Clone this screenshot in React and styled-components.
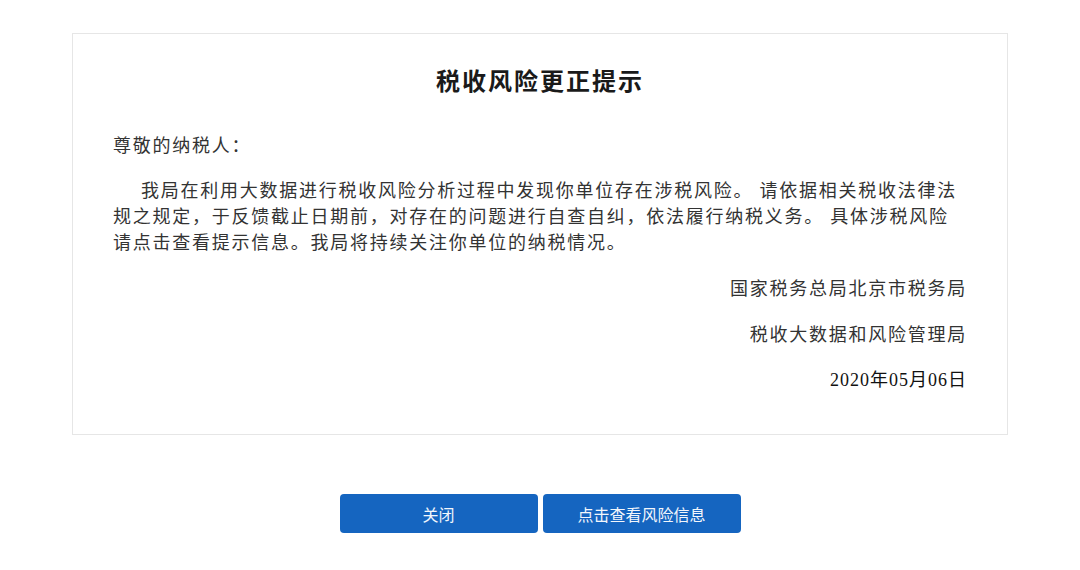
import React from 'react';
import styled, { createGlobalStyle } from 'styled-components';

const GlobalStyle = createGlobalStyle`
  html, body {
    margin: 0;
    padding: 0;
    background: #fff;
  }
  body {
    font-family: "Liberation Serif", "Noto Sans CJK SC", serif;
  }
`;

const notice = {
  title: '税收风险更正提示',
  greeting: '尊敬的纳税人：',
  lines: [
    '我局在利用大数据进行税收风险分析过程中发现你单位存在涉税风险。 请依据相关税收法律法规之规定，于反馈截止日期前，对存在的问题进行自查自纠，依法履行纳税义务。 具体涉税风险',
    '请点击查看提示信息。我局将持续关注你单位的纳税情况。',
  ],
  signs: ['国家税务总局北京市税务局', '税收大数据和风险管理局'],
  date: '2020年05月06日',
};

function App() {
  return (
    <Styled.Page>
      <GlobalStyle />
      <Styled.Card>
        <Styled.Title>{notice.title}</Styled.Title>
        <Styled.Greeting>{notice.greeting}</Styled.Greeting>
        <Styled.Body>
          {notice.lines[0]}
          <br />
          {notice.lines[1]}
        </Styled.Body>
        {notice.signs.map((s) => (
          <Styled.Sign key={s}>{s}</Styled.Sign>
        ))}
        <Styled.Sign $date>{notice.date}</Styled.Sign>
      </Styled.Card>
      <Styled.Actions>
        <Styled.Button>关闭</Styled.Button>
        <Styled.Button>点击查看风险信息</Styled.Button>
      </Styled.Actions>
    </Styled.Page>
  );
}

const Styled = {
  Page: styled.div`
    padding-top: 33px;
    display: flex;
    flex-direction: column;
    align-items: center;
  `,
  Card: styled.div`
    width: 936px;
    box-sizing: border-box;
    border: 1px solid #e6e6e6;
    padding: 31px 40px 41px;
    color: #333;
    font-size: 18px;
    letter-spacing: 1.75px;
    line-height: 26px;
  `,
  Title: styled.h3`
    margin: 0 0 34px;
    text-align: center;
    font-size: 24px;
    line-height: 34px;
    letter-spacing: 2px;
    font-weight: 700;
    color: #1a1a1a;
  `,
  Greeting: styled.p`
    margin: 0 0 19px;
  `,
  Body: styled.p`
    margin: 0 0 20px;
    text-indent: 28px;
  `,
  Sign: styled.p`
    margin: 0 0 19.5px;
    text-align: right;
    letter-spacing: ${(p) => (p.$date ? '1px' : '1.75px')};
    color: ${(p) => (p.$date ? '#111' : '#333')};
    &:last-child {
      margin-bottom: 0;
    }
  `,
  Actions: styled.div`
    margin-top: 59px;
    display: flex;
    gap: 5px;
  `,
  Button: styled.button`
    width: 198px;
    height: 39px;
    border: 0;
    border-radius: 4px;
    background: #1565c0;
    color: #f2f6fc;
    font-family: "Noto Sans CJK SC", sans-serif;
    font-size: 16px;
    cursor: pointer;
  `,
};

export default App;
